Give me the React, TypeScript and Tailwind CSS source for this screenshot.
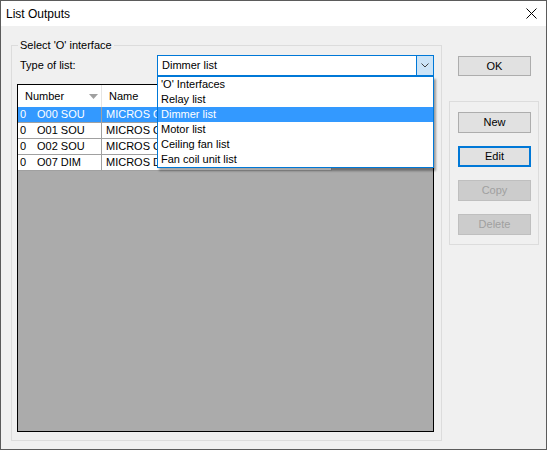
import React from 'react';

const rows = [
  { no: '0', code: 'O00 SOU', name: 'MICROS OUTPUT 00 SOU', selected: true },
  { no: '0', code: 'O01 SOU', name: 'MICROS OUTPUT 01 SOU', selected: false },
  { no: '0', code: 'O02 SOU', name: 'MICROS OUTPUT 02 SOU', selected: false },
  { no: '0', code: 'O07 DIM', name: 'MICROS DIMMER 07', selected: false },
];

const listTypes = [
  "'O' Interfaces",
  'Relay list',
  'Dimmer list',
  'Motor list',
  'Ceiling fan list',
  'Fan coil unit list',
];

const Button: React.FC<{ label: string; focused?: boolean; disabled?: boolean }> = ({ label, focused, disabled }) => {
  let cls = 'border border-[#adadad] bg-[#e1e1e1] text-black';
  if (focused) cls = 'border-2 border-[#0078d7] bg-[#e1e1e1] text-black';
  if (disabled) cls = 'border border-[#bfbfbf] bg-[#cccccc] text-[#a0a0a0]';
  return (
    <div className={`w-[73px] h-[21px] flex items-center justify-center leading-none ${cls}`}>
      {label}
    </div>
  );
};

const App: React.FC = () => {
  return (
    <div
      className="w-[547px] h-[450px] border border-[#5b5b5b] bg-[#f0f0f0] flex flex-col text-[11px] text-black overflow-hidden"
      style={{ fontFamily: '"Liberation Sans", Arial, sans-serif' }}
    >
      {/* title bar */}
      <div className="h-[25px] bg-white flex items-center justify-between pl-[5px] pr-[9px]">
        <span className="text-[12px] leading-none">List Outputs</span>
        <svg width="11" height="11" viewBox="0 0 11 11">
          <path d="M0.5 0.5 L10.5 10.5 M10.5 0.5 L0.5 10.5" stroke="#000" strokeWidth="1" />
        </svg>
      </div>

      <div className="flex-1 flex pl-[10px]">
        <fieldset className="mt-[12px] w-[431px] h-[403px] border border-[#dcdcdc] pl-[5px] pr-[7px] pb-[8px] flex flex-col">
          <legend className="ml-[1px] px-[2px] leading-[15px]">Select 'O' interface</legend>

          <div className="flex items-center mt-[2px] h-[21px]">
            <span className="w-[140px] pl-[3px]">Type of list:</span>
            <div className="relative flex-1 h-[21px] border border-[#0078d7] bg-white flex">
              <span className="flex-1 pl-[4px] leading-[19px]">Dimmer list</span>
              <div className="w-[17px] border-l border-[#0078d7] bg-[#cce4f7] flex items-center justify-center">
                <svg width="8" height="5" viewBox="0 0 8 5">
                  <path d="M0.5 0.5 L4 4 L7.5 0.5" stroke="#404040" fill="none" strokeWidth="1" />
                </svg>
              </div>

              {/* open dropdown */}
              <div className="absolute left-[-1px] right-[-1px] top-[20px] z-10 border border-[#0078d7] bg-white shadow-[2px_3px_2px_rgba(0,0,0,0.35)]">
                {listTypes.map((t) => (
                  <div
                    key={t}
                    className={`h-[15px] leading-[15px] pl-[3px] ${t === 'Dimmer list' ? 'bg-[#3399ff] text-white' : ''}`}
                  >
                    {t}
                  </div>
                ))}
              </div>
            </div>
          </div>

          {/* list view */}
          <div className="mt-[8px] flex-1 border border-black bg-[#ababab] flex flex-col">
            <div className="h-[22px] bg-white flex">
              <div className="w-[84px] border-r border-[#e5e5e5] flex items-center justify-between pl-[7px] pr-[3px]">
                <span>Number</span>
                <svg width="9" height="5" viewBox="0 0 9 5">
                  <path d="M0 0 L9 0 L4.5 5 Z" fill="#a0a0a0" />
                </svg>
              </div>
              <div className="flex-1 flex items-center pl-[7px]">Name</div>
            </div>
            {rows.map((r) => (
              <div key={r.code} className={`h-[16px] flex ${r.selected ? 'text-white' : 'text-black'}`}>
                <div
                  className={`w-[84px] border-r border-b border-[#a0a0a0] pl-[2px] leading-[15px] whitespace-nowrap ${r.selected ? 'bg-[#3399ff]' : 'bg-white'}`}
                >
                  <span className="inline-block w-[17px]">{r.no}</span>
                  {r.code}
                </div>
                <div
                  className={`w-[230px] border-r border-b border-[#a0a0a0] pl-[4px] leading-[15px] whitespace-nowrap overflow-hidden ${r.selected ? 'bg-[#3399ff]' : 'bg-white'}`}
                >
                  {r.name}
                </div>
              </div>
            ))}
          </div>
        </fieldset>

        <div className="ml-[7px] w-[90px] flex flex-col pt-[30px]">
          <div className="ml-[9px]">
            <div className="w-[73px] h-[20px] border border-[#adadad] bg-[#e1e1e1] flex items-center justify-center leading-none">
              OK
            </div>
          </div>
          <div className="mt-[25px] h-[144px] border border-[#dcdcdc] pt-[10px] pl-[8px] flex flex-col gap-[13px]">
            <Button label="New" />
            <Button label="Edit" focused />
            <Button label="Copy" disabled />
            <Button label="Delete" disabled />
          </div>
        </div>
      </div>
    </div>
  );
};

export default App;
